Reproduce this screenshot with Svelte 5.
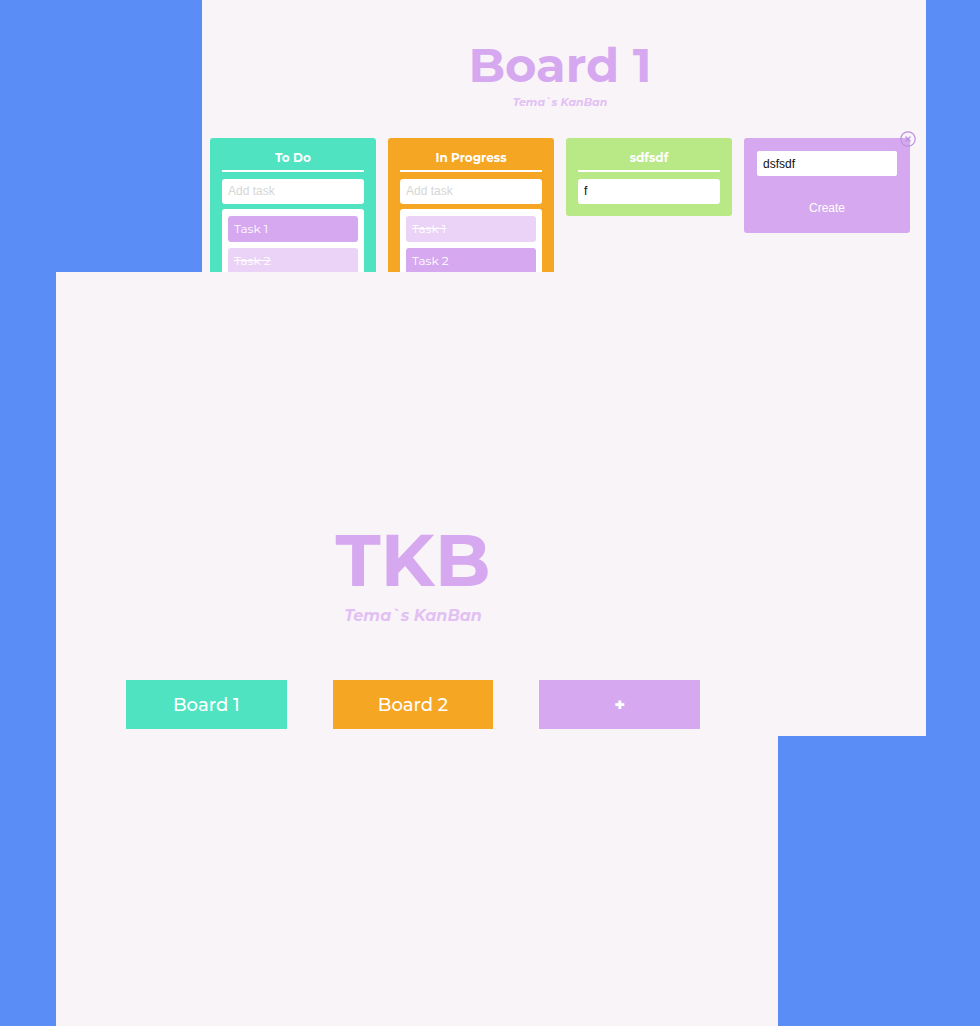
<script>
  let columns = $state([
    { title: 'To Do', color: 'teal', draft: '', tasks: [{ name: 'Task 1', done: false }, { name: 'Task 2', done: true }] },
    { title: 'In Progress', color: 'orange', draft: '', tasks: [{ name: 'Task 1', done: true }, { name: 'Task 2', done: false }] },
    { title: 'sdfsdf', color: 'green', draft: 'f', tasks: [] }
  ]);
  let columnName = $state('dsfsdf');
</script>

<div class="stage">
  <section class="board">
    <header>
      <h1>Board 1</h1>
      <p class="tagline">Tema`s KanBan</p>
    </header>
    <div class="columns">
      {#each columns as column}
        <article class="column {column.color}">
          <h2>{column.title}</h2>
          <input class="add" type="text" placeholder="Add task" aria-label="Add task to {column.title}" bind:value={column.draft} />
          {#if column.tasks.length}
            <ul>
              {#each column.tasks as task}
                <li class:done={task.done}>{task.name}</li>
              {/each}
            </ul>
          {/if}
        </article>
      {/each}
      <form class="column create" onsubmit={(e) => e.preventDefault()}>
        <input type="text" aria-label="Column name" bind:value={columnName} />
        <button class="submit">Create</button>
        <button class="close" type="button" aria-label="Close">
          <svg viewBox="0 0 16 16" width="16" height="16" fill="none" stroke="currentColor">
            <circle cx="8" cy="8" r="7.2" stroke-width="1.2" />
            <path d="M5.5 5.5l5 5M10.5 5.5l-5 5" stroke-width="1.2" />
          </svg>
        </button>
      </form>
    </div>
  </section>

  <main class="home">
    <h1>TKB</h1>
    <p class="tagline">Tema`s KanBan</p>
    <nav>
      <a class="teal" href="#board-1">Board 1</a>
      <a class="orange" href="#board-2">Board 2</a>
      <button class="purple" aria-label="Add board">+</button>
    </nav>
  </main>
</div>

<style>
  :global(body) {
    margin: 0;
    background: #5b8df6;
  }

  .stage {
    display: grid;
    grid-template-columns: 56fr 146fr 576fr 148fr 54fr;
    grid-template-rows: 272px 464px minmax(290px, 1fr);
    min-height: 100vh;
    font-family: Montserrat, Inter, sans-serif;
  }

  .stage *,
  .stage {
    box-sizing: border-box;
  }

  h1,
  h2,
  p,
  ul {
    margin: 0;
    padding: 0;
  }

  h1 {
    color: #d6a8ef;
    font-weight: 700;
  }

  .tagline {
    color: #e2c0f3;
    font-weight: 700;
    font-style: italic;
  }

  .teal { background: #50e3c2; }
  .orange { background: #f5a623; }
  .green { background: #b8e986; }
  .purple, .create { background: #d6a8ef; }

  .board {
    grid-area: 1 / 3 / 3 / 5;
    min-width: 0;
    padding: 36px 16px 0 8px;
    background: #f9f4f8;
  }

  header {
    text-align: center;
  }

  .board h1 {
    font-size: 48px;
    line-height: 58px;
  }

  .board .tagline {
    font-size: 11px;
    line-height: 16px;
  }

  .columns {
    display: grid;
    grid-template-columns: repeat(4, minmax(0, 1fr));
    align-items: start;
    gap: 12px;
    padding-top: 28px;
  }

  .column {
    position: relative;
    display: flex;
    flex-direction: column;
    padding: 12px;
    border-radius: 3px;
  }

  h2 {
    margin-bottom: 7px;
    padding-bottom: 4px;
    border-bottom: 2px solid #fff;
    color: #fff;
    font-size: 12px;
    line-height: 16px;
    text-align: center;
  }

  input {
    width: 100%;
    height: 25px;
    padding: 0 6px;
    border: 0;
    border-radius: 3px;
    background: #fff;
    color: #111;
    font-family: "Liberation Sans", Arial, sans-serif;
    font-size: 12px;
  }

  .add {
    padding-bottom: 2px;
  }

  input::placeholder {
    color: #d6d6d6;
    opacity: 1;
  }

  ul {
    display: grid;
    gap: 6px;
    margin-top: 5px;
    padding: 7px 6px;
    border-radius: 3px;
    background: #fff;
    list-style: none;
  }

  li {
    padding: 0 6px;
    border-radius: 3px;
    background: #d6a8ef;
    color: #fff;
    font-size: 12px;
    line-height: 26px;
  }

  li.done {
    background: #ead3f7;
    text-decoration: line-through;
  }

  .create {
    padding: 13px;
  }

  .create input {
    border-radius: 2px;
  }

  button {
    padding: 0;
    border: 0;
    cursor: pointer;
  }

  .submit {
    height: 40px;
    margin-top: 12px;
    margin-bottom: -8px;
    background: transparent;
    color: #fff;
    font-family: "Liberation Sans", Arial, sans-serif;
    font-size: 12px;
  }

  .close {
    position: absolute;
    top: -7px;
    right: -6px;
    width: 16px;
    height: 16px;
    background: transparent;
    color: #b890de;
  }

  .close svg {
    display: block;
  }

  .home {
    z-index: 1;
    grid-area: 2 / 2 / 4 / 4;
    min-width: 0;
    padding: 244px 78px 0 70px;
    background: #f9f4f8;
    text-align: center;
  }

  .home h1 {
    font-size: 73px;
    line-height: 88px;
  }

  .home .tagline {
    font-size: 16px;
    line-height: 24px;
  }

  nav {
    display: grid;
    grid-template-columns: repeat(3, minmax(0, 1fr));
    gap: 46px;
    margin-top: 52px;
  }

  nav a,
  nav button {
    height: 49px;
    color: #fff;
    font-family: inherit;
    font-size: 18px;
    font-weight: 500;
    line-height: 50px;
    text-decoration: none;
  }

  nav button {
    font-weight: 800;
  }
</style>
